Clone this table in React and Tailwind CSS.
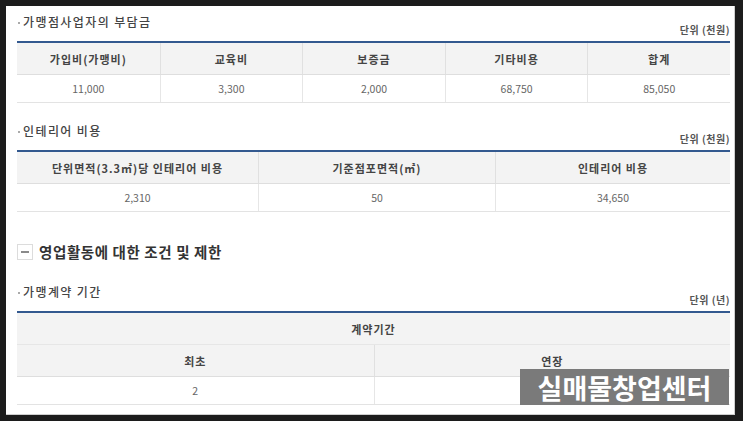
import React from "react"

const font = "font-['Noto_Sans_CJK_KR',sans-serif]"

function SectionHead({ title, unit }) {
  return (
    <div className="flex justify-between h-[27px]">
      <h3 className="flex items-start text-[12px] leading-[16px] font-medium text-[#444] tracking-[1.4px]">
        <span className="w-[2px] h-[2px] bg-[#aaa] mt-[8px] mr-[3px] ml-[1px]"></span>
        {title}
      </h3>
      <span className="self-end pb-[4px] text-[10px] leading-[14px] font-bold text-[#555] tracking-[0.5px]">{unit}</span>
    </div>
  )
}

function HeadCell({ children, first }) {
  return (
    <div className={`flex items-center justify-center text-[11px] leading-[12px] font-bold text-[#444] tracking-[1px] ${first ? "" : "border-l border-[#e0e0e0]"}`}>
      {children}
    </div>
  )
}

function DataCell({ children, first }) {
  return (
    <div className={`flex items-center justify-center text-[10.5px] leading-[12px] text-[#666] ${first ? "" : "border-l border-[#e6e6e6]"}`}>
      {children}
    </div>
  )
}

export default function App() {
  return (
    <div className={`h-[421px] bg-[#1c1c1c] pl-[6px] pr-[8px] pt-[6px] pb-[6px] ${font}`}>
      <div className="relative h-full bg-white border-r border-b border-[#cfcfcf] pl-[11px] pr-[4px] pt-[8px] overflow-hidden">
        {/* 부담금 */}
        <SectionHead title="가맹점사업자의 부담금" unit="단위 (천원)" />
        <div className="border-t-2 border-[#33598f]">
          <div className="grid grid-cols-5 h-[32px] bg-[#f3f3f3] border-b border-[#dedede]">
            <HeadCell first>가입비(가맹비)</HeadCell>
            <HeadCell>교육비</HeadCell>
            <HeadCell>보증금</HeadCell>
            <HeadCell>기타비용</HeadCell>
            <HeadCell>합계</HeadCell>
          </div>
          <div className="grid grid-cols-5 h-[28px] border-b border-[#e3e3e3]">
            <DataCell first>11,000</DataCell>
            <DataCell>3,300</DataCell>
            <DataCell>2,000</DataCell>
            <DataCell>68,750</DataCell>
            <DataCell>85,050</DataCell>
          </div>
        </div>

        {/* 인테리어 */}
        <div className="mt-[20px]">
          <SectionHead title="인테리어 비용" unit="단위 (천원)" />
          <div className="border-t-2 border-[#33598f]">
            <div className="grid grid-cols-[241px_237px_1fr] h-[32px] bg-[#f3f3f3] border-b border-[#dedede]">
              <HeadCell first>단위면적(3.3㎡)당 인테리어 비용</HeadCell>
              <HeadCell>기준점포면적(㎡)</HeadCell>
              <HeadCell>인테리어 비용</HeadCell>
            </div>
            <div className="grid grid-cols-[241px_237px_1fr] h-[28px] border-b border-[#e3e3e3]">
              <DataCell first>2,310</DataCell>
              <DataCell>50</DataCell>
              <DataCell>34,650</DataCell>
            </div>
          </div>
        </div>

        {/* 영업활동 */}
        <div className="flex items-center mt-[32px] h-[16px]">
          <span className="flex items-center justify-center w-[16px] h-[16px] border border-[#dcdcdc] bg-white">
            <span className="w-[8px] h-[2px] bg-[#8a8a8a]"></span>
          </span>
          <h2 className="ml-[6px] text-[14.5px] leading-[16px] font-bold text-[#333] tracking-[0.6px]">영업활동에 대한 조건 및 제한</h2>
        </div>

        {/* 계약기간 */}
        <div className="mt-[24px]">
          <SectionHead title="가맹계약 기간" unit="단위 (년)" />
          <div className="border-t-2 border-[#33598f]">
            <div className="grid grid-cols-1 h-[32px] bg-[#f3f3f3] border-b border-[#e6e6e6]">
              <HeadCell first>계약기간</HeadCell>
            </div>
            <div className="grid grid-cols-2 h-[32px] bg-[#f3f3f3] border-b border-[#dedede]">
              <HeadCell first>최초</HeadCell>
              <HeadCell>연장</HeadCell>
            </div>
            <div className="grid grid-cols-2 h-[28px] border-b border-[#e3e3e3]">
              <DataCell first>2</DataCell>
              <DataCell></DataCell>
            </div>
          </div>
        </div>

        <div className="absolute left-[514px] top-[363px] w-[209px] h-[36px] bg-[#7a7a7a] flex items-center justify-center">
          <span className="text-[27px] leading-none font-bold text-white">실매물창업센터</span>
        </div>
      </div>
    </div>
  )
}
